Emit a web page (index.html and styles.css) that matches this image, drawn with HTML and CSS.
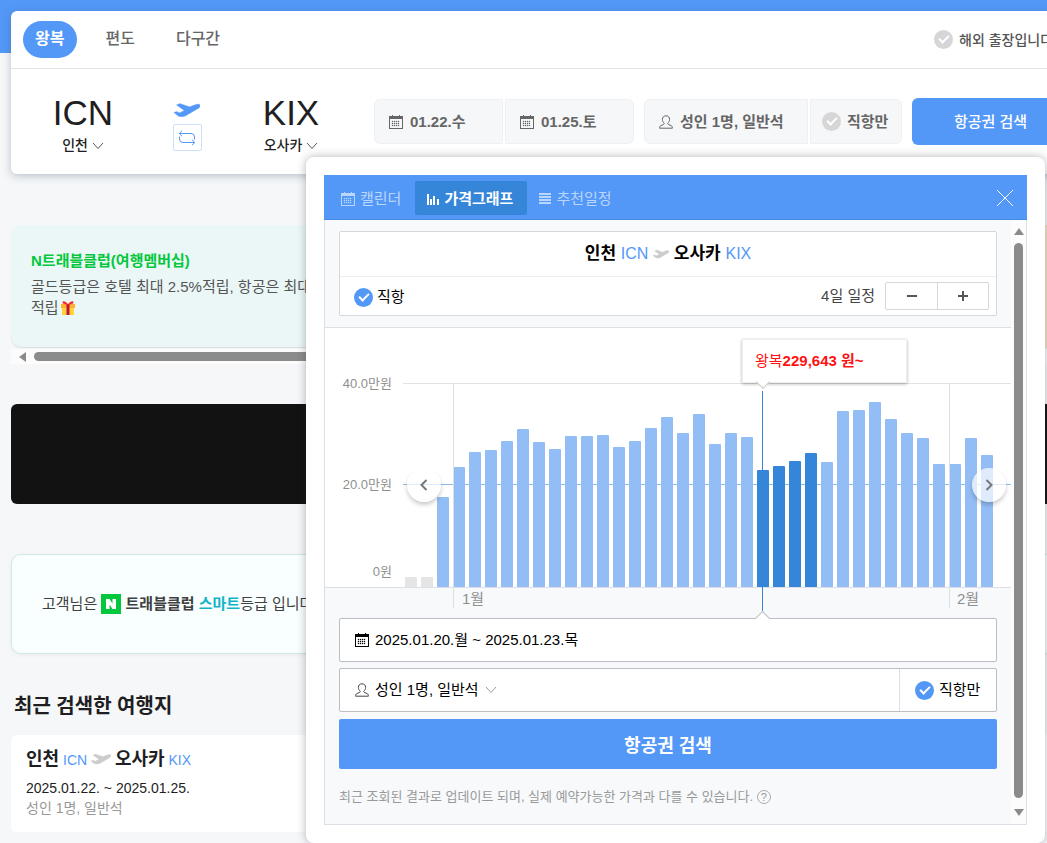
FILE: index.html
```html
<!DOCTYPE html>
<html lang="ko">
  <head>
    <meta charset="UTF-8" />
    <meta name="viewport" content="width=device-width,initial-scale=1.0" />
    <title>항공권 검색</title>
    <link rel="stylesheet" href="styles.css">
  </head>
  <body>
    <svg class="sprite" aria-hidden="true">
      <symbol id="plane" viewBox="0 0 26 14">
        <path d="M0 9.600 2.600 8.700 5.600 9.900 10.500 7.400 2.600 2 6 .7 15.600 4 21 1.900C23.6.9 25.8 1 26 2.5 26.1 4.100 25 5 23 6L12 12.500C10.300 13.400 9 13.600 7 13.500L4.800 13.300Z" fill="currentColor" stroke="currentColor" stroke-width=".6" stroke-linejoin="round" />
      </symbol>
      <symbol id="calendar" viewBox="0 0 14 14">
        <path d="M0 1h3V0h1v1h6V0h1v1h3v13H0zM1 4v9h12V4z" fill="currentColor" fill-rule="evenodd" />
        <path d="M3 6h1v1H3zm2 0h1v1H5zm2 0h1v1H7zm2 0h1v1H9zM3 8h1v1H3zm2 0h1v1H5zm2 0h1v1H7zm2 0h1v1H9zM3 10h1v1H3zm2 0h1v1H5zm2 0h1v1H7zm2 0h1v1H9z" fill="currentColor" stroke="currentColor" stroke-width=".3" />
      </symbol>
      <symbol id="person" viewBox="0 0 14 14">
        <path d="M7 .8C4.6.8 3.4 2.4 3.4 4.4 3.4 6.2 4.2 7.2 5 8c.5.6.3 1.200-.5 1.500L2 10.500C1 11 .6 11.800.6 13.200h12.800c0-1.400-.4-2.200-1.400-2.700L9.500 9.500C8.700 9.200 8.500 8.600 9 8c.8-.8 1.600-1.800 1.600-3.600C10.600 2.400 9.400.8 7 .8z" fill="none" stroke="currentColor" />
      </symbol>
      <symbol id="down" viewBox="0 0 12 8">
        <path d="M1 1l5 5.500L11 1" fill="none" stroke="currentColor" />
      </symbol>
    </svg>
    <div class="top-band"></div>
    <div class="page">
      <div class="search">
        <div class="search-tabs">
          <button class="trip active" type="button">왕복</button>
          <button class="trip" type="button">편도</button>
          <button class="trip" type="button">다구간</button>
          <label class="check business"><input type="checkbox" />해외 출장입니다.</label>
        </div>
        <div class="search-row">
          <button class="airport" type="button">
            <span class="code">ICN</span>
            <span class="city">인천 <svg class="down"><use href="#down" /></svg></span>
          </button>
          <div class="swap">
            <svg class="swap-plane"><use href="#plane" /></svg>
            <button type="button" class="swap-button" aria-label="출발 도착 바꾸기">
              <svg viewBox="0 0 18 16" width="18" height="16" fill="none" stroke="currentColor"><path d="M4 .8 1.200 3.500 4 6.200M1.500 3.500H13a3.500 3.500 0 0 1 3.500 3.500V9.500M14 9.800l2.800 2.700L14 15.200M16.500 12.500H5A3.500 3.500 0 0 1 1.500 9V6.500" /></svg>
            </button>
          </div>
          <button class="airport" type="button">
            <span class="code">KIX</span>
            <span class="city">오사카 <svg class="down"><use href="#down" /></svg></span>
          </button>
          <div class="fields">
            <button class="field date first" type="button"><svg class="icon"><use href="#calendar" /></svg>01.22.수</button>
            <button class="field date last" type="button"><svg class="icon"><use href="#calendar" /></svg>01.25.토</button>
          </div>
          <div class="fields">
            <button class="field people first" type="button"><svg class="icon"><use href="#person" /></svg>성인 1명, 일반석</button>
            <label class="field direct last check"><input type="checkbox" />직항만</label>
          </div>
          <button class="search-button" type="button">항공권 검색</button>
        </div>
      </div>

      <div class="promos">
        <a class="promo" href="#">
          <strong>N트래블클럽(여행멤버십)</strong>
          <span>골드등급은 호텔 최대 2.5%적립, 항공은 최대 적립<svg class="gift" viewBox="0 0 14 14"><path d="M1 4h12v10H1z" fill="#ffd43b" /><path d="M0 3h14v4H0z" fill="#ffb02e" /><path d="M5.500 3h3v11h-3z" fill="#c3113d" /><path d="M7 3.500C5 0 1.500-.5 1.500 1.500 1.500 3 4 3.500 7 3.500zm0 0C9 0 12.500-.5 12.500 1.500 12.500 3 10 3.500 7 3.500z" fill="#f8312f" /></svg></span>
        </a>
        <a class="promo" href="#"></a>
        <a class="promo" href="#"></a>
        <a class="promo beige" href="#"></a>
      </div>
      <div class="scroll-x"><i class="arrow-left"></i><i class="thumb"></i></div>
      <div class="banner"></div>

      <div class="notice">
        고객님은
        <svg class="naver" viewBox="0 0 20 20"><path d="M0 0h20v20H0z" fill="#03c73c" /><path d="M5 5h3.500l3 4.500V5H15v10h-3.500l-3-4.500V15H5z" fill="#fff" /></svg>
        <b>트래블클럽 <em>스마트</em></b>등급 입니다.
      </div>

      <h2>최근 검색한 여행지</h2>
      <a class="recent" href="#">
        <span class="recent-route"><b>인천</b> <span class="blue">ICN</span> <svg class="recent-plane"><use href="#plane" /></svg> <b>오사카</b> <span class="blue">KIX</span></span>
        <span class="recent-date">2025.01.22. ~ 2025.01.25.</span>
        <span class="recent-people">성인 1명, 일반석</span>
      </a>

      <div class="popup">
        <div class="panel">
          <div class="panel-head">
            <button type="button" class="view"><svg class="icon"><use href="#calendar" /></svg>캘린더</button>
            <button type="button" class="view active"><svg class="graph-icon" viewBox="0 0 12 12"><path d="M0 1h2v11H0zm3 5h2v6H3zm3-3h2v9H6zm4 3h2v6h-2z" fill="currentColor" /></svg>가격그래프</button>
            <button type="button" class="view"><svg class="graph-icon" viewBox="0 0 12 12"><path d="M0 0h12v2H0zm0 3h12v2H0zm0 3h12v2H0zm0 3h12v2H0z" fill="currentColor" /></svg>추천일정</button>
            <button type="button" class="close" aria-label="닫기"><svg viewBox="0 0 18 18" width="18" height="18"><path d="M1 1l16 16M17 1 1 17" stroke="#fff" /></svg></button>
          </div>
          <div class="panel-body">
            <div class="panel-content">
              <div class="route">
                <div class="route-title"><b>인천</b> <span class="blue">ICN</span> <svg class="route-plane"><use href="#plane" /></svg> <b>오사카</b> <span class="blue">KIX</span></div>
                <div class="route-options">
                  <label class="check"><input type="checkbox" checked />직항</label>
                  <span class="days">4일 일정</span>
                  <div class="stepper">
                    <button type="button" aria-label="하루 줄이기"><svg viewBox="0 0 10 10"><path d="M0 5h10" /></svg></button>
                    <button type="button" aria-label="하루 늘리기"><svg viewBox="0 0 10 10"><path d="M0 5h10M5 0v10" /></svg></button>
                  </div>
                </div>
              </div>

              <div class="chart">
                <span class="y-label top">40.0만원</span>
                <span class="y-label mid">20.0만원</span>
                <span class="y-label zero">0원</span>
                <div class="plot">
                  <div class="line-top"></div>
                  <div class="line-mid"></div>
                  <div class="bars">
                    <i class="none" style="height:10px"></i>
                    <i class="none" style="height:10px"></i>
                    <i style="height:90px"></i>
                    <i style="height:120px"></i>
                    <i style="height:135px"></i>
                    <i style="height:137px"></i>
                    <i style="height:146px"></i>
                    <i style="height:158px"></i>
                    <i style="height:145px"></i>
                    <i style="height:138px"></i>
                    <i style="height:151px"></i>
                    <i style="height:151px"></i>
                    <i style="height:152px"></i>
                    <i style="height:140px"></i>
                    <i style="height:146px"></i>
                    <i style="height:159px"></i>
                    <i style="height:170px"></i>
                    <i style="height:154px"></i>
                    <i style="height:173px"></i>
                    <i style="height:143px"></i>
                    <i style="height:154px"></i>
                    <i style="height:150px"></i>
                    <i class="selected" style="height:117px"></i>
                    <i class="selected" style="height:121px"></i>
                    <i class="selected" style="height:126px"></i>
                    <i class="selected" style="height:134px"></i>
                    <i style="height:125px"></i>
                    <i style="height:176px"></i>
                    <i style="height:177px"></i>
                    <i style="height:185px"></i>
                    <i style="height:168px"></i>
                    <i style="height:154px"></i>
                    <i style="height:149px"></i>
                    <i style="height:123px"></i>
                    <i style="height:123px"></i>
                    <i style="height:149px"></i>
                    <i style="height:132px"></i>
                  </div>
                  <span class="month january">1월</span>
                  <span class="month february">2월</span>
                  <div class="marker"></div>
                  <div class="price">왕복<b>229,643 원~</b></div>
                  <button type="button" class="move prev" aria-label="이전"><svg viewBox="0 0 8 12"><path d="M6.500 1 1.500 6l5 5" /></svg></button>
                  <button type="button" class="move next" aria-label="다음"><svg viewBox="0 0 8 12"><path d="M1.500 1l5 5-5 5" /></svg></button>
                </div>
              </div>

              <div class="form">
                <button type="button" class="box period"><svg class="icon"><use href="#calendar" /></svg>2025.01.20.월 ~ 2025.01.23.목</button>
                <div class="box passengers">
                  <button type="button"><svg class="icon"><use href="#person" /></svg>성인 1명, 일반석<svg class="down"><use href="#down" /></svg></button>
                  <label class="check"><input type="checkbox" checked />직항만</label>
                </div>
                <button type="button" class="submit">항공권 검색</button>
                <p>최근 조회된 결과로 업데이트 되며, 실제 예약가능한 가격과 다를 수 있습니다. <span class="help">?</span></p>
              </div>
            </div>
            <div class="scroll-y"><i class="arrow-up"></i><i class="thumb"></i><i class="arrow-down"></i></div>
          </div>
        </div>
      </div>
    </div>
  </body>
</html>
```

FILE: styles.css
```css
*,
*::before,
*::after {
  box-sizing: border-box;
}
body {
  min-height: 100vh;
  margin: 0;
  overflow: hidden;
  background: #f5f7f9;
  color: #1e1e23;
  font-family: "Liberation Sans", "Noto Sans CJK KR", sans-serif;
  font-size: 15px;
  line-height: 22px;
}
button {
  margin: 0;
  padding: 0;
  border: 0;
  background: none;
  color: inherit;
  font: inherit;
  cursor: pointer;
}
a {
  color: inherit;
  text-decoration: none;
}
svg {
  flex: none;
}
.sprite {
  position: absolute;
  width: 0;
  height: 0;
}
.blue {
  color: #5398f7;
}
.icon {
  width: 14px;
  height: 14px;
}
.down {
  width: 12px;
  height: 8px;
  color: #555;
}
.top-band {
  height: 53px;
  margin-bottom: -42px;
  background: #5398f7;
}
.page {
  position: relative;
  min-width: 1070px;
  margin: 0 11px;
  padding-bottom: 11px;
}

/* check boxes */
.check {
  display: flex;
  align-items: center;
  cursor: pointer;
}
.check input {
  appearance: none;
  display: flex;
  justify-content: center;
  width: 19px;
  height: 19px;
  margin: 0 6px 0 0;
  border-radius: 50%;
  background: #d6d6d6;
}
.check input:checked {
  background: #5398f7;
}
.check input::after {
  content: "";
  width: 10px;
  height: 6px;
  margin-top: 5px;
  border-left: 2px solid #fff;
  border-bottom: 2px solid #fff;
  transform: rotate(-45deg);
}

/* search */
.search {
  position: relative;
  height: 163px;
  border-radius: 6px;
  background: #fff;
  box-shadow: 0 2px 8px rgba(50, 70, 90, 0.3);
}
.search-tabs {
  display: flex;
  align-items: center;
  height: 58px;
  padding: 0 24px 0 12px;
  border-bottom: 1px solid #e3e3e6;
}
.trip {
  height: 37px;
  margin-right: 16px;
  padding: 0 13px 2px 12px;
  border-radius: 19px;
  color: #666;
  font-size: 16px;
  font-weight: 500;
}
.trip.active {
  background: #5398f7;
  color: #fff;
  font-weight: bold;
}
.business {
  margin-left: auto;
  color: #555;
  font-size: 14px;
  font-weight: 500;
}
.search-row {
  display: flex;
  align-items: flex-start;
  padding: 22px 0 0 12px;
}
.airport {
  width: 120px;
}
.code {
  display: block;
  font-size: 35px;
  line-height: 44px;
}
.city {
  display: block;
  font-size: 14px;
  font-weight: 500;
  line-height: 20px;
}
.swap {
  display: flex;
  flex-direction: column;
  align-items: center;
  gap: 7px;
  width: 88px;
  padding-top: 12px;
}
.swap-plane {
  width: 26px;
  height: 14px;
  color: #5398f7;
}
.swap-button {
  display: flex;
  align-items: center;
  justify-content: center;
  width: 29px;
  height: 27px;
  border: 1px solid #cfe0fb;
  border-radius: 2px;
  color: #5398f7;
}
.fields {
  display: flex;
  gap: 2px;
  margin: 8px 10px 0 0;
}
.airport + .fields {
  margin-left: 23px;
}
.field {
  display: flex;
  align-items: center;
  gap: 7px;
  height: 45px;
  padding: 0 14px;
  border: 1px solid #eff0f3;
  background: #f5f7f9;
  color: #666;
  font-weight: bold;
}
.first {
  border-radius: 6px 0 0 6px;
}
.last {
  border-radius: 0 6px 6px 0;
}
.date {
  width: 129px;
}
.people {
  width: 164px;
}
.direct {
  width: 92px;
  gap: 0;
  padding: 0 11px;
}
.search-button {
  width: 157px;
  height: 47px;
  margin-top: 7px;
  border-radius: 6px;
  background: #5398f7;
  color: #fff;
  font-weight: 500;
}

/* page behind the popup */
.promos {
  display: flex;
  gap: 12px;
  margin-top: 51px;
}
.promo {
  flex: 0 0 326px;
  height: 122px;
  padding: 25px 12px 0 20px;
  border-radius: 10px;
  background: #ebf7f7;
  box-shadow: 0 1px 1px rgba(0, 0, 0, 0.1);
  color: #555;
}
.promo.beige {
  background: #f8e5c8;
}
.promo strong {
  display: block;
  margin-bottom: 4px;
  color: #03c73c;
  font-weight: bold;
}
.promo span {
  display: block;
  line-height: 21px;
}
.gift {
  width: 14px;
  height: 14px;
  margin-left: 2px;
  vertical-align: -2px;
}
.scroll-x {
  display: flex;
  align-items: center;
  gap: 8px;
  height: 15px;
  margin-top: 2px;
  padding: 0 8px;
  background: #fcfcfc;
}
.arrow-left {
  border: solid transparent;
  border-width: 5px 7px 5px 0;
  border-right-color: #8b8b8b;
}
.thumb {
  flex: 1;
  border-radius: 5px;
  background: #8b8b8b;
}
.scroll-x .thumb {
  flex: 0 1 900px;
  height: 9px;
}
.banner {
  height: 100px;
  margin-top: 40px;
  border-radius: 6px;
  background: #121212;
}
.notice {
  height: 100px;
  margin-top: 50px;
  padding: 38px 30px;
  border: 1px solid #cdebe4;
  border-radius: 10px;
  background: #f9ffff;
  box-shadow: 0 1px 4px rgba(0, 0, 0, 0.06);
  color: #404040;
}
.notice em {
  color: #11b5c9;
  font-style: normal;
}
.naver {
  width: 20px;
  height: 20px;
  vertical-align: -5px;
}
h2 {
  margin: 37px 3px 14px;
  font-size: 20px;
  line-height: 30px;
}
.recent {
  display: flex;
  flex-direction: column;
  height: 97px;
  padding: 12px 15px;
  border-radius: 6px;
  background: #fff;
  font-size: 14px;
  line-height: 20px;
}
.recent-route {
  margin-bottom: 5px;
  line-height: 25px;
}
.recent-route b {
  font-size: 18px;
}
.recent-plane {
  width: 20px;
  height: 12px;
  color: #ccc;
}
.recent-people {
  color: #999;
}

/* popup */
.popup {
  position: absolute;
  top: 146px;
  left: 295px;
  width: 739px;
  padding: 18px;
  border-radius: 8px;
  background: #fff;
  box-shadow: 0 0 10px rgba(40, 40, 60, 0.35);
  color: #000;
}
.panel-head {
  display: flex;
  align-items: center;
  height: 45px;
  padding: 1px 13px 0 5px;
  border-bottom: 1px solid #478bdf;
  background: #5398f7;
}
.view {
  display: flex;
  align-items: center;
  gap: 5px;
  height: 34px;
  padding: 2px 14px 0 12px;
  border-radius: 2px;
  color: #bbd6fc;
}
.view.active {
  background: #3585d9;
  color: #fff;
  font-weight: bold;
}
.graph-icon {
  width: 12px;
  height: 12px;
}
.close {
  display: flex;
  margin-left: auto;
}
.panel-body {
  display: flex;
  border: 1px solid #dcdfe5;
  border-top: 0;
  background: #f7f9fb;
}
.panel-content {
  flex: 1;
}
.scroll-y {
  display: flex;
  flex-direction: column;
  align-items: center;
  gap: 8px;
  width: 15px;
  padding: 8px 0;
  background: #fcfcfc;
}
.scroll-y .thumb {
  width: 9px;
}
.arrow-up,
.arrow-down {
  border: solid transparent;
  border-width: 0 5px 7px;
  border-bottom-color: #8b8b8b;
}
.arrow-down {
  margin-top: 3px;
  border-width: 7px 5px 0;
  border-top-color: #8b8b8b;
}
.route {
  margin: 11px 14px;
  border: 1px solid #d5d7da;
  border-radius: 2px;
  background: #fff;
}
.route-title {
  height: 45px;
  border-bottom: 1px solid #eee;
  font-size: 17px;
  line-height: 43px;
  text-align: center;
}
.route-title .blue {
  font-size: 16px;
}
.route-plane {
  width: 16px;
  height: 10px;
  color: #ccc;
}
.route-options {
  display: flex;
  align-items: center;
  height: 38px;
  padding: 0 7px 0 14px;
}
.route .check {
  padding-top: 2px;
}
.route .check input {
  margin-right: 4px;
}
.days {
  margin: 0 10px 0 auto;
  color: #444;
}
.stepper {
  display: flex;
  height: 28px;
  border: 1px solid #d5d7da;
  border-radius: 2px;
}
.stepper button {
  width: 51px;
}
.stepper button + button {
  border-left: 1px solid #d5d7da;
}
.stepper svg {
  width: 10px;
  height: 10px;
  stroke: #555;
  stroke-width: 2;
}

/* price graph */
.chart {
  position: relative;
  height: 261px;
  padding-left: 78px;
  border: 1px solid #dcdfe5;
  border-width: 1px 0;
  background: #fff;
}
.y-label {
  position: absolute;
  left: 0;
  width: 67px;
  color: #8f8f8f;
  font-size: 13px;
  text-align: right;
}
.y-label.top {
  top: 45px;
}
.y-label.mid {
  top: 146px;
}
.y-label.zero {
  top: 233px;
}
.plot {
  position: relative;
  height: 100%;
}
.line-top,
.line-mid {
  position: absolute;
  top: 55px;
  width: 100%;
  border-top: 1px solid #e2e2e4;
}
.line-mid {
  top: 156px;
  border-color: #91bbe8;
}
.bars {
  position: relative;
  display: flex;
  align-items: flex-end;
  gap: 4px;
  height: 100%;
  padding-left: 2px;
}
.bars i {
  flex: none;
  width: 12px;
  border-radius: 1px 1px 0 0;
  background: #93bdf5;
}
.bars .none {
  background: #e5e5e5;
}
.bars .selected {
  background: #3585d9;
}
.month {
  position: absolute;
  top: 56px;
  height: 224px;
  padding: 204px 0 0 8px;
  border-left: 1px solid #dcdfe3;
  color: #8f8f8f;
}
.january {
  left: 50px;
}
.february {
  left: 546px;
  padding-left: 7px;
}
.marker {
  position: absolute;
  top: 63px;
  left: 359px;
  height: 222px;
  border-left: 1px solid #3585d9;
}
.price {
  position: absolute;
  top: 11px;
  left: 339px;
  width: 165px;
  height: 44px;
  padding: 11px 12px;
  border: 1px solid #eee;
  background: #fff;
  box-shadow: 0 1px 3px rgba(0, 0, 0, 0.3);
  color: #ff1212;
  line-height: 20px;
}
.price::after {
  content: "";
  position: absolute;
  bottom: -5px;
  left: 15px;
  width: 10px;
  height: 10px;
  border: solid #ccc;
  border-width: 0 1px 1px 0;
  background: #fff;
  transform: rotate(45deg);
}
.move {
  position: absolute;
  top: 140px;
  display: flex;
  align-items: center;
  justify-content: center;
  width: 34px;
  height: 34px;
  border-radius: 50%;
  background: rgba(255, 255, 255, 0.7);
  box-shadow: 0 3px 4px rgba(0, 0, 0, 0.2);
}
.move svg {
  width: 8px;
  height: 12px;
  fill: none;
  stroke: #777;
  stroke-width: 2;
}
.prev {
  left: 4px;
}
.next {
  right: 5px;
}

/* bottom form */
.form {
  display: flex;
  flex-direction: column;
  gap: 6px;
  padding: 30px 14px 16px;
}
.box {
  display: flex;
  height: 44px;
  border: 1px solid #bbbec2;
  border-radius: 2px;
  background: #fff;
}
.period {
  position: relative;
  align-items: center;
  gap: 6px;
  padding: 0 15px;
}
.period::before {
  content: "";
  position: absolute;
  top: -6px;
  left: 417px;
  width: 11px;
  height: 11px;
  border: solid #bbbec2;
  border-width: 1px 0 0 1px;
  background: #fff;
  transform: rotate(45deg);
}
.passengers button {
  flex: 1;
  display: flex;
  align-items: center;
  gap: 6px;
  padding-left: 15px;
}
.passengers .down {
  color: #999;
}
.passengers .icon {
  color: #444;
}
.passengers .check {
  width: 97px;
  padding-left: 15px;
  border-left: 1px solid #dcdfe3;
}
.passengers .check input {
  margin-right: 5px;
}
.submit {
  height: 50px;
  margin-top: 1px;
  padding-top: 3px;
  border-radius: 2px;
  background: #5398f7;
  color: #fff;
  font-size: 18px;
  font-weight: bold;
}
.form p {
  margin: 11px 0 0;
  color: #999;
  font-size: 13px;
}
.help {
  display: inline-block;
  width: 14px;
  height: 14px;
  border: 1px solid #aaa;
  border-radius: 50%;
  font-size: 11px;
  line-height: 12px;
  text-align: center;
}
```
